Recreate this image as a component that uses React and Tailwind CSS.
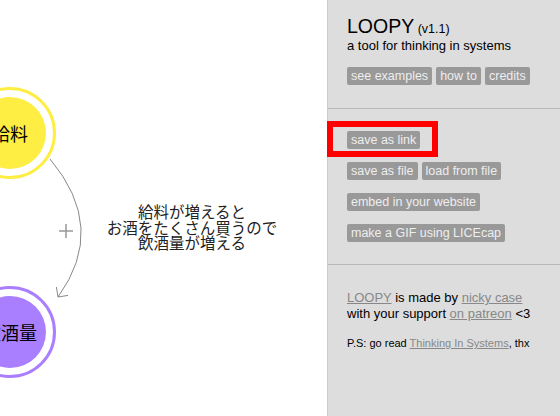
const sans = { fontFamily: '"Liberation Sans", Arial, sans-serif' };
const cjk = { fontFamily: '"Noto Sans CJK JP", sans-serif' };

function Btn({ children }) {
    return (
        <span className="inline-block h-[18px] px-[4px] rounded-[2px] bg-[#999999] text-[#eeeeee] text-[12.5px] leading-[18px] whitespace-nowrap">
            {children}
        </span>
    );
}

function Canvas() {
    return (
        <div className="relative w-[327px] h-full bg-white overflow-hidden">
            <svg className="absolute inset-0" width="327" height="416" viewBox="0 0 327 416">
                {/* edge 給料 -> 飲酒量 */}
                <path d="M50 159 Q108 228 58 297" fill="none" stroke="#888" strokeWidth="1" />
                <path d="M68 295.4 L58 297 L56.4 287" fill="none" stroke="#888" strokeWidth="1" />
                <path d="M59 231 H73 M66 224 V238" stroke="#999" strokeWidth="1.5" />

                {/* nodes */}
                <circle cx="10" cy="133" r="44.5" fill="none" stroke="#FEEE43" strokeWidth="3" />
                <circle cx="10" cy="133" r="36" fill="#FEEE43" />
                <circle cx="10" cy="332" r="44.5" fill="none" stroke="#A97FFF" strokeWidth="3" />
                <circle cx="10" cy="332" r="36" fill="#A97FFF" />
            </svg>

            <div className="absolute left-[-30px] top-[121px] w-[80px] text-center text-[18px] leading-[24px] text-black" style={cjk}>
                給料
            </div>
            <div className="absolute left-[-30px] top-[320px] w-[80px] text-center text-[18px] leading-[24px] text-black" style={cjk}>
                飲酒量
            </div>

            <div className="absolute left-[92px] top-[204px] w-[200px] text-center text-[15.5px] leading-[15.5px] text-[#222]" style={cjk}>
                <div>給料が増えると</div>
                <div>お酒をたくさん買うので</div>
                <div>飲酒量が増える</div>
            </div>
        </div>
    );
}

function Sidebar() {
    return (
        <div className="relative flex-1 h-full bg-[#dddddd] border-l border-[#cccccc] text-black" style={sans}>
            {/* about */}
            <div className="px-[19px] pt-[14px] pb-[23px] border-b border-[#b8b8b8]">
                <div className="h-[24px] leading-[24px] whitespace-nowrap">
                    <span className="text-[19.5px]">LOOPY</span>
                    <span className="text-[12.5px]"> (v1.1)</span>
                </div>
                <div className="text-[13px] leading-[15px]">a tool for thinking in systems</div>
                <div className="flex gap-[4px] mt-[14px]">
                    <Btn>see examples</Btn>
                    <Btn>how to</Btn>
                    <Btn>credits</Btn>
                </div>
            </div>

            {/* save / load */}
            <div className="px-[19px] pt-[22px] pb-[22px] border-b border-[#b8b8b8] flex flex-col gap-[13px]">
                <div className="flex gap-[4px]">
                    <Btn>save as link</Btn>
                </div>
                <div className="flex gap-[4px]">
                    <Btn>save as file</Btn>
                    <Btn>load from file</Btn>
                </div>
                <div className="flex gap-[4px]">
                    <Btn>embed in your website</Btn>
                </div>
                <div className="flex gap-[4px]">
                    <Btn>make a GIF using LICEcap</Btn>
                </div>
            </div>

            {/* credits */}
            <div className="px-[19px] pt-[25px]">
                <div className="text-[13px] leading-[16px]">
                    <div>
                        <a className="text-[#888] underline">LOOPY</a> is made by <a className="text-[#888] underline">nicky case</a>
                    </div>
                    <div>
                        with your support <a className="text-[#888] underline">on patreon</a> &lt;3
                    </div>
                </div>
                <div className="mt-[15px] text-[11px] leading-[13px]">
                    P.S: go read <a className="text-[#888] underline">Thinking In Systems</a>, thx
                </div>
            </div>

            {/* highlight box */}
            <div className="absolute left-[-1px] top-[121px] w-[111px] h-[36px] border-[6px] border-[#ff0000]"></div>
        </div>
    );
}

export default function App() {
    return (
        <div className="flex w-[560px] h-[416px] overflow-hidden bg-white">
            <Canvas />
            <Sidebar />
        </div>
    );
}
